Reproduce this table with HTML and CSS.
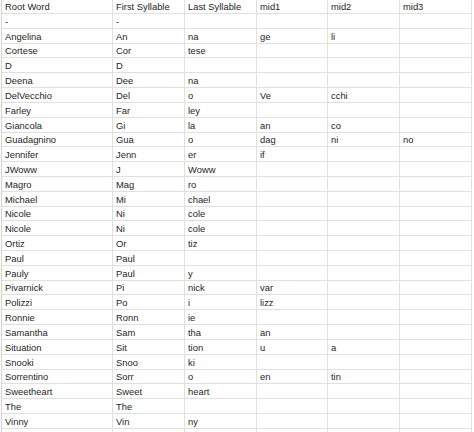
FILE: index.html
```html
<!DOCTYPE html>
<html>
<head>
<meta charset="utf-8">
<link rel="stylesheet" href="styles.css">
</head>
<body>
<div class="sheet">
<div class="c">Root Word</div><div class="c">First Syllable</div><div class="c">Last Syllable</div><div class="c">mid1</div><div class="c">mid2</div><div class="c">mid3</div>
<div class="c">-</div><div class="c">-</div><div class="c"></div><div class="c"></div><div class="c"></div><div class="c"></div>
<div class="c">Angelina</div><div class="c">An</div><div class="c">na</div><div class="c">ge</div><div class="c">li</div><div class="c"></div>
<div class="c">Cortese</div><div class="c">Cor</div><div class="c">tese</div><div class="c"></div><div class="c"></div><div class="c"></div>
<div class="c">D</div><div class="c">D</div><div class="c"></div><div class="c"></div><div class="c"></div><div class="c"></div>
<div class="c">Deena</div><div class="c">Dee</div><div class="c">na</div><div class="c"></div><div class="c"></div><div class="c"></div>
<div class="c">DelVecchio</div><div class="c">Del</div><div class="c">o</div><div class="c">Ve</div><div class="c">cchi</div><div class="c"></div>
<div class="c">Farley</div><div class="c">Far</div><div class="c">ley</div><div class="c"></div><div class="c"></div><div class="c"></div>
<div class="c">Giancola</div><div class="c">Gi</div><div class="c">la</div><div class="c">an</div><div class="c">co</div><div class="c"></div>
<div class="c">Guadagnino</div><div class="c">Gua</div><div class="c">o</div><div class="c">dag</div><div class="c">ni</div><div class="c">no</div>
<div class="c">Jennifer</div><div class="c">Jenn</div><div class="c">er</div><div class="c">if</div><div class="c"></div><div class="c"></div>
<div class="c">JWoww</div><div class="c">J</div><div class="c">Woww</div><div class="c"></div><div class="c"></div><div class="c"></div>
<div class="c">Magro</div><div class="c">Mag</div><div class="c">ro</div><div class="c"></div><div class="c"></div><div class="c"></div>
<div class="c">Michael</div><div class="c">Mi</div><div class="c">chael</div><div class="c"></div><div class="c"></div><div class="c"></div>
<div class="c">Nicole</div><div class="c">Ni</div><div class="c">cole</div><div class="c"></div><div class="c"></div><div class="c"></div>
<div class="c">Nicole</div><div class="c">Ni</div><div class="c">cole</div><div class="c"></div><div class="c"></div><div class="c"></div>
<div class="c">Ortiz</div><div class="c">Or</div><div class="c">tiz</div><div class="c"></div><div class="c"></div><div class="c"></div>
<div class="c">Paul</div><div class="c">Paul</div><div class="c"></div><div class="c"></div><div class="c"></div><div class="c"></div>
<div class="c">Pauly</div><div class="c">Paul</div><div class="c">y</div><div class="c"></div><div class="c"></div><div class="c"></div>
<div class="c">Pivarnick</div><div class="c">Pi</div><div class="c">nick</div><div class="c">var</div><div class="c"></div><div class="c"></div>
<div class="c">Polizzi</div><div class="c">Po</div><div class="c">i</div><div class="c">lizz</div><div class="c"></div><div class="c"></div>
<div class="c">Ronnie</div><div class="c">Ronn</div><div class="c">ie</div><div class="c"></div><div class="c"></div><div class="c"></div>
<div class="c">Samantha</div><div class="c">Sam</div><div class="c">tha</div><div class="c">an</div><div class="c"></div><div class="c"></div>
<div class="c">Situation</div><div class="c">Sit</div><div class="c">tion</div><div class="c">u</div><div class="c">a</div><div class="c"></div>
<div class="c">Snooki</div><div class="c">Snoo</div><div class="c">ki</div><div class="c"></div><div class="c"></div><div class="c"></div>
<div class="c">Sorrentino</div><div class="c">Sorr</div><div class="c">o</div><div class="c">en</div><div class="c">tin</div><div class="c"></div>
<div class="c">Sweetheart</div><div class="c">Sweet</div><div class="c">heart</div><div class="c"></div><div class="c"></div><div class="c"></div>
<div class="c">The</div><div class="c">The</div><div class="c"></div><div class="c"></div><div class="c"></div><div class="c"></div>
<div class="c">Vinny</div><div class="c">Vin</div><div class="c">ny</div><div class="c"></div><div class="c"></div><div class="c"></div>
<div class="c"></div><div class="c"></div><div class="c"></div><div class="c"></div><div class="c"></div><div class="c"></div>
</div>
</body>
</html>
```
FILE: styles.css
```css
html, body {
  margin: 0;
  padding: 0;
  background: #ffffff;
  overflow: hidden;
}
.sheet {
  display: grid;
  grid-template-columns: 111px 72px 72px 71px 72px 72px;
  grid-auto-rows: 14.82px;
  margin-left: 1px;
  margin-top: -0.82px;
  border-left: 1px solid #d4d4d4;
  width: max-content;
  font-family: "Liberation Sans", Arial, sans-serif;
  font-size: 9.4px;
  color: #262626;
}
.c {
  box-sizing: border-box;
  border-right: 1px solid #e0e0e0;
  border-bottom: 1px solid #e0e0e0;
  padding: 0 2px 1px 3px;
  line-height: 11px;
  display: flex;
  align-items: flex-end;
  white-space: nowrap;
  overflow: hidden;
}
.c:nth-child(6n+1) {
  padding-left: 3px;
}
```
